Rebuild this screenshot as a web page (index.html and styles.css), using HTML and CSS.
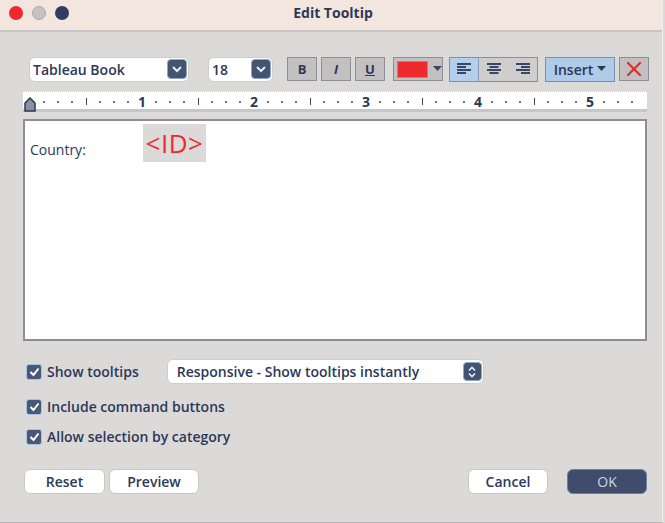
FILE: index.html
```html
<!DOCTYPE html>
<html>
<head>
<meta charset="utf-8">
<link rel="stylesheet" href="styles.css">
</head>
<body>
<div class="window">
  <div class="titlebar">
    <div class="lights">
      <span class="light red"></span>
      <span class="light gray"></span>
      <span class="light navy"></span>
    </div>
    <div class="title">Edit Tooltip</div>
  </div>
  <div class="content">
    <div class="toolbar">
      <div class="select font-select">
        <span class="sel-text">Tableau Book</span>
        <span class="sel-btn"><svg width="12" height="8" viewBox="0 0 12 8"><path d="M2 2 L6 6 L10 2" fill="none" stroke="#e8eef8" stroke-width="2"/></svg></span>
      </div>
      <div class="select size-select">
        <span class="sel-text">18</span>
        <span class="sel-btn"><svg width="12" height="8" viewBox="0 0 12 8"><path d="M2 2 L6 6 L10 2" fill="none" stroke="#e8eef8" stroke-width="2"/></svg></span>
      </div>
      <div class="tbtn fmt b">B</div>
      <div class="tbtn fmt i">I</div>
      <div class="tbtn fmt u">U</div>
      <div class="tbtn color">
        <span class="swatch"></span>
        <svg width="9" height="6" viewBox="0 0 9 6"><path d="M0 0 H9 L4.5 5 Z" fill="#3a4663"/></svg>
      </div>
      <div class="align-group">
        <div class="seg active">
          <svg width="14" height="12" viewBox="0 0 14 12"><g fill="#3a4663"><rect x="0" y="0" width="14" height="2"/><rect x="0" y="3" width="9" height="2"/><rect x="0" y="6" width="14" height="2"/><rect x="0" y="9" width="9" height="2"/></g></svg>
        </div>
        <div class="seg">
          <svg width="14" height="12" viewBox="0 0 14 12"><g fill="#3a4663"><rect x="0" y="0" width="14" height="2"/><rect x="2.5" y="3" width="9" height="2"/><rect x="0" y="6" width="14" height="2"/><rect x="2.5" y="9" width="9" height="2"/></g></svg>
        </div>
        <div class="seg">
          <svg width="14" height="12" viewBox="0 0 14 12"><g fill="#3a4663"><rect x="0" y="0" width="14" height="2"/><rect x="5" y="3" width="9" height="2"/><rect x="0" y="6" width="14" height="2"/><rect x="5" y="9" width="9" height="2"/></g></svg>
        </div>
      </div>
      <div class="tbtn insert">Insert <svg width="9" height="6" viewBox="0 0 9 6"><path d="M0 0 H9 L4.5 5 Z" fill="#2c3857"/></svg></div>
      <div class="tbtn clear">
        <svg width="16" height="16" viewBox="0 0 16 16"><path d="M2 2 L14 14 M14 2 L2 14" stroke="#e02a2e" stroke-width="2.2" stroke-linecap="round"/></svg>
      </div>
    </div>

    <div class="ruler">
      <svg class="marker" width="12" height="15" viewBox="0 0 12 15"><path d="M1 14 V6 L6 1 L11 6 V14 Z" fill="#8a90a0" stroke="#2c3857" stroke-width="1.5"/></svg>
      <div class="ticks" id="ticks"></div>
    </div>

    <div class="editor">
      <span class="label">Country:</span>
      <span class="field">&lt;ID&gt;</span>
    </div>

    <div class="options">
      <div class="opt-row">
        <label class="check"><span class="box"><svg width="11" height="10" viewBox="0 0 11 10"><path d="M1.5 5 L4.5 8 L9.5 1.5" fill="none" stroke="#fff" stroke-width="2"/></svg></span>Show tooltips</label>
        <div class="select mode-select">
          <span class="sel-text">Responsive - Show tooltips instantly</span>
          <span class="sel-btn small"><svg width="10" height="12" viewBox="0 0 10 12"><path d="M2 4.5 L5 1.5 L8 4.5 M2 7.5 L5 10.5 L8 7.5" fill="none" stroke="#e8eef8" stroke-width="1.6"/></svg></span>
        </div>
      </div>
      <div class="opt-row">
        <label class="check"><span class="box"><svg width="11" height="10" viewBox="0 0 11 10"><path d="M1.5 5 L4.5 8 L9.5 1.5" fill="none" stroke="#fff" stroke-width="2"/></svg></span>Include command buttons</label>
      </div>
      <div class="opt-row">
        <label class="check"><span class="box"><svg width="11" height="10" viewBox="0 0 11 10"><path d="M1.5 5 L4.5 8 L9.5 1.5" fill="none" stroke="#fff" stroke-width="2"/></svg></span>Allow selection by category</label>
      </div>
    </div>

    <div class="footer">
      <div class="left">
        <div class="btn reset">Reset</div>
        <div class="btn preview">Preview</div>
      </div>
      <div class="right">
        <div class="btn cancel">Cancel</div>
        <div class="btn ok">OK</div>
      </div>
    </div>
  </div>
</div>
<script>
  (function(){
    var t = document.getElementById('ticks');
    var html = '';
    for (var k = 1; k <= 5; k++) {
      var seq = ['d','d','d','l','d','d','d','n'];
      for (var j = 0; j < seq.length; j++) {
        if (seq[j] === 'd') html += '<span class="cell"><i class="dot"></i></span>';
        else if (seq[j] === 'l') html += '<span class="cell"><i class="line"></i></span>';
        else html += '<span class="cell num">' + k + '</span>';
      }
    }
    for (var m = 0; m < 3; m++) html += '<span class="cell"><i class="dot"></i></span>';
    t.innerHTML = html;
  })();
</script>
</body>
</html>
```

FILE: styles.css
```css
* { box-sizing: border-box; }
html, body { margin: 0; padding: 0; }
body {
  width: 665px;
  height: 523px;
  background: #dcdad8;
  font-family: "Open Sans", "Noto Sans", sans-serif;
  color: #2c3857;
  overflow: hidden;
}
.window {
  width: 663px;
  height: 523px;
  background: #dcdad8;
  border-right: 1px solid #efedeb;
  border-bottom: 1px solid #b8b6b6;
}
.titlebar {
  height: 32px;
  background: #f3e6df;
  border-bottom: 2px solid #c9c5c5;
  display: flex;
  align-items: center;
  position: relative;
}
.lights {
  display: flex;
  gap: 9px;
  padding-left: 9px;
  margin-top: -4px;
}
.light {
  width: 14px;
  height: 14px;
  border-radius: 50%;
  display: block;
}
.light.red { background: #ee2a2f; }
.light.gray { background: #c4c2c4; border: 1px solid #a8a6aa; }
.light.navy { background: #2e3d5e; }
.title {
  position: absolute;
  left: 0; right: 0;
  top: 3px;
  text-align: center;
  font-weight: 700;
  font-size: 14px;
  color: #2c3857;
  padding-left: 4px;
}
.content {
  padding: 24px 0 0 23px;
}
.toolbar {
  display: flex;
  align-items: center;
  height: 26px;
  padding-left: 6px;
}
.select {
  background: #fff;
  border-radius: 6px;
  border: 1px solid #cfcccc;
  display: flex;
  align-items: center;
  justify-content: space-between;
  height: 25px;
  padding: 0 1px 0 3px;
  font-weight: 600;
  font-size: 14px;
  color: #2c3857;
}
.font-select { width: 160px; }
.size-select { width: 65px; margin-left: 19px; }
.sel-btn {
  width: 20px;
  height: 20px;
  flex: none;
  background: #44536f;
  border-radius: 4px;
  border: 1px solid #8aa6cc;
  display: flex;
  align-items: center;
  justify-content: center;
}
.sel-btn.small { width: 19px; height: 19px; }
.tbtn {
  height: 24px;
  background: #c2c0c1;
  border: 1px solid #8e8d94;
  display: flex;
  align-items: center;
  justify-content: center;
  font-weight: 700;
  font-size: 13px;
  color: #2c3857;
}
.fmt { width: 30px; }
.b { margin-left: 14px; }
.i { margin-left: 4px; font-style: italic; }
.u { margin-left: 4px; text-decoration: underline; }
.color {
  margin-left: 8px;
  width: 50px;
  justify-content: flex-start;
  padding-left: 3px;
  gap: 5px;
}
.swatch {
  width: 31px;
  height: 17px;
  background: #ee2a2f;
  border: 1px solid #9a8f96;
  display: block;
}
.align-group {
  margin-left: 6px;
  display: flex;
  height: 25px;
  border: 1px solid #8e8d94;
  background: #cfcdcd;
}
.seg {
  width: 29px;
  display: flex;
  align-items: center;
  justify-content: center;
}
.seg.active { background: #b2d0ec; border-right: 1px solid #8e9bb4; }
.insert {
  margin-left: 7px;
  width: 70px;
  height: 25px;
  background: #aecbe8;
  border: 1px solid #7e8da8;
  font-size: 14px;
  font-weight: 600;
  gap: 4px;
}
.clear {
  margin-left: 4px;
  width: 30px;
}
.ruler {
  margin-top: 9px;
  width: 624px;
  height: 21px;
  background: #fff;
  border-top: 1px dotted #d0cccc;
  border-bottom: 3px solid #c8c6c8;
  position: relative;
  padding-left: 14px;
  padding-top: 1px;
}
.marker {
  position: absolute;
  left: 1px;
  top: 5px;
}
.ticks {
  display: flex;
  height: 17px;
  align-items: center;
}
.cell {
  width: 14px;
  flex: none;
  display: flex;
  justify-content: center;
  align-items: center;
}
.dot {
  display: block;
  width: 2px;
  height: 2px;
  background: #6b7388;
}
.line {
  display: block;
  width: 1px;
  height: 7px;
  background: #3a4663;
}
.num {
  font-weight: 700;
  font-size: 14px;
  line-height: 17px;
  color: #2c3857;
}
.editor {
  margin-top: 7px;
  width: 624px;
  height: 222px;
  background: #fff;
  border: 2px solid #8d8c98;
  padding: 3px 0 0 5px;
  display: flex;
  align-items: flex-start;
}
.label {
  font-size: 14px;
  margin-top: 16px;
  color: #2c3857;
  width: 113px;
}
.field {
  background: #dcdad8;
  color: #ee2a2f;
  font-size: 26px;
  height: 38px;
  width: 63px;
  line-height: 38px;
  text-align: center;
  letter-spacing: 0.5px;
}
.options {
  margin-top: 18px;
  padding-left: 3px;
}
.opt-row {
  display: flex;
  align-items: center;
  height: 25px;
}
.opt-row + .opt-row { margin-top: 5px; }
.opt-row:nth-child(2) { margin-top: 10px; }
.check {
  display: flex;
  align-items: center;
  gap: 5px;
  font-weight: 600;
  font-size: 14px;
  color: #2c3857;
  white-space: nowrap;
}
.box {
  width: 16px;
  height: 16px;
  flex: none;
  background: #4a5878;
  border: 1px solid #a8c4e4;
  border-radius: 3px;
  display: flex;
  align-items: center;
  justify-content: center;
}
.mode-select {
  margin-left: 28px;
  width: 317px;
  height: 25px;
  padding-left: 9px;
}
.footer {
  margin-top: 20px;
  display: flex;
  justify-content: space-between;
  width: 624px;
  padding-left: 1px;
}
.left, .right { display: flex; gap: 4px; }
.right { gap: 19px; }
.btn {
  height: 25px;
  background: #fff;
  border: 1px solid #c9c6c6;
  border-radius: 6px;
  display: flex;
  align-items: center;
  justify-content: center;
  font-weight: 600;
  font-size: 14px;
  color: #2c3857;
}
.reset { width: 81px; }
.preview { width: 90px; }
.cancel { width: 80px; }
.ok {
  width: 80px;
  background: #3f4c6c;
  border: 1px solid #6e7f9e;
  color: #d0d6e4;
  font-weight: 400;
}
```
